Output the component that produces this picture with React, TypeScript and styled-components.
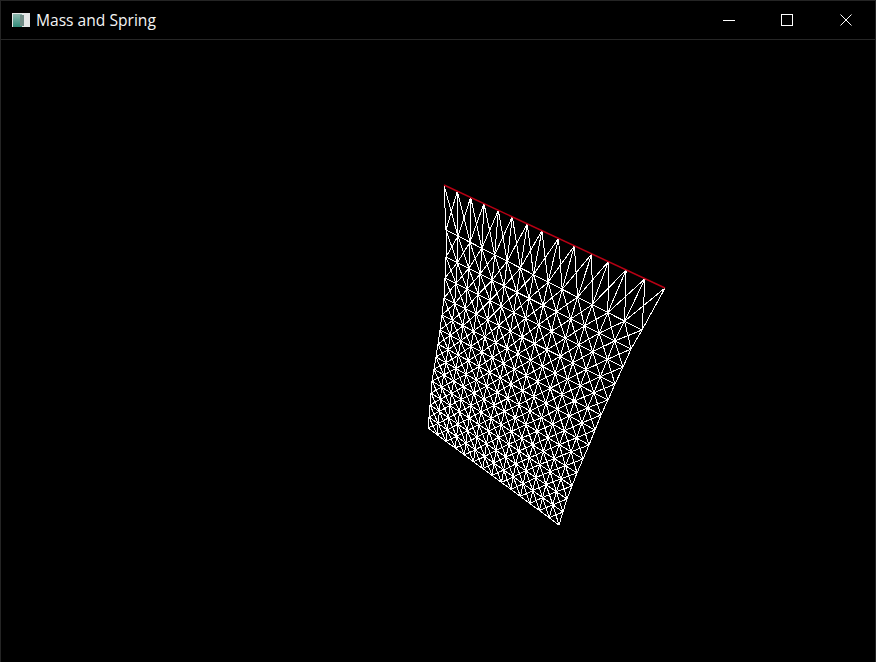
import React from 'react';
import styled, { createGlobalStyle } from 'styled-components';

const GlobalStyle = createGlobalStyle`
  html, body {
    margin: 0;
    padding: 0;
    background: #000;
  }
`;

const Window = styled.div`
  width: 876px;
  height: 662px;
  box-sizing: border-box;
  display: flex;
  flex-direction: column;
  background: #000;
  border: 1px solid #242424;
  border-bottom: none;
  overflow: hidden;
`;

const TitleBar = styled.div`
  height: 39px;
  flex: none;
  box-sizing: border-box;
  display: flex;
  align-items: center;
  padding-left: 11px;
  padding-bottom: 1px;
  border-bottom: 1px solid #262626;
`;

const AppIcon = styled.svg`
  width: 18px;
  height: 14px;
  flex: none;
`;

const Title = styled.span`
  flex: 1;
  margin-left: 6px;
  color: #f4f4f4;
  font-family: 'Open Sans', 'Noto Sans', sans-serif;
  font-size: 15.6px;
  line-height: 20px;
`;

const Controls = styled.div`
  display: flex;
  align-self: stretch;
`;

const ControlButton = styled.div<{ $width: number }>`
  width: ${(p) => p.$width}px;
  display: flex;
  align-items: center;
  justify-content: center;
`;

const Canvas = styled.svg`
  flex: 1;
  display: block;
  width: 874px;
`;

const N = 15;

// spacing of the top edge, the cloth is closer to the viewer on the right
const topSpacing = [0, 0.06, 0.121, 0.181, 0.246, 0.309, 0.377, 0.443, 0.518, 0.59, 0.669, 0.744, 0.824, 0.91, 1];

const leftEdge = [
  [444, 185], [446, 230], [446, 257], [445, 278], [444, 298], [442, 315], [440, 330], [438, 344],
  [436, 357], [434, 369], [432, 381], [431, 393], [430, 405], [429, 417], [428, 428],
];

const rightEdge = [
  [665, 288], [642, 330], [631, 349], [623, 367], [615, 384], [608, 400], [601, 415], [595, 430],
  [589, 445], [583, 459], [577, 473], [572, 486], [567, 499], [563, 512], [559, 525],
];

const node = (col: number, row: number) => {
  const blend = (row / (N - 1)) * 0.8;
  const s = topSpacing[col] * (1 - blend) + (col / (N - 1)) * blend;
  const [lx, ly] = leftEdge[row];
  const [rx, ry] = rightEdge[row];
  return [lx + (rx - lx) * s, ly + (ry - ly) * s];
};

const buildMesh = () => {
  let d = '';
  const seg = (a: number[], b: number[]) => {
    d += `M${a[0].toFixed(1)} ${a[1].toFixed(1)}L${b[0].toFixed(1)} ${b[1].toFixed(1)}`;
  };
  for (let r = 0; r < N; r++) {
    for (let c = 0; c < N; c++) {
      if (c < N - 1 && r > 0) seg(node(c, r), node(c + 1, r));
      if (r < N - 1) seg(node(c, r), node(c, r + 1));
      if (c < N - 1 && r < N - 1) {
        seg(node(c, r), node(c + 1, r + 1));
        seg(node(c + 1, r), node(c, r + 1));
      }
    }
  }
  return d;
};

const meshPath = buildMesh();

export default function App() {
  return (
    <>
      <GlobalStyle />
      <Window>
        <TitleBar>
          <AppIcon viewBox="0 0 18 14">
            <defs>
              <linearGradient id="iconFill" x1="0" y1="0" x2="0" y2="1">
                <stop offset="0" stopColor="#8fb9b0" />
                <stop offset="1" stopColor="#2f8a78" />
              </linearGradient>
            </defs>
            <rect width="18" height="14" fill="#e4e6e6" />
            <rect x="1" y="1" width="9" height="13" fill="url(#iconFill)" />
            <rect x="8" y="2" width="4" height="11" fill="#6f8a84" />
          </AppIcon>
          <Title>Mass and Spring</Title>
          <Controls>
            <ControlButton $width={58}>
              <svg width="12" height="12" viewBox="0 0 12 12">
                <path d="M0 6.5H12" stroke="#fff" strokeWidth="1" />
              </svg>
            </ControlButton>
            <ControlButton $width={58}>
              <svg width="12" height="12" viewBox="0 0 12 12">
                <rect x="0.5" y="0.5" width="11" height="11" fill="none" stroke="#fff" strokeWidth="1" />
              </svg>
            </ControlButton>
            <ControlButton $width={59}>
              <svg width="12" height="12" viewBox="0 0 12 12">
                <path d="M0.5 0.5L11.5 11.5M11.5 0.5L0.5 11.5" stroke="#fff" strokeWidth="1" />
              </svg>
            </ControlButton>
          </Controls>
        </TitleBar>
        <Canvas viewBox="1 40 874 622">
          <path d={meshPath} stroke="#fff" strokeWidth="1" fill="none" shapeRendering="crispEdges" />
          <path d="M444 185L665 288" stroke="#b80014" strokeWidth="1.5" fill="none" />
        </Canvas>
      </Window>
    </>
  );
}
